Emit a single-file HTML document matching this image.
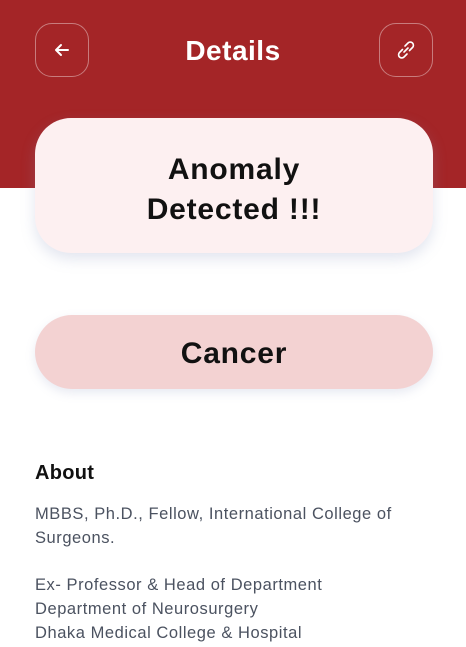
<!DOCTYPE html>
<html><head><style>
body{margin:0;width:466px;height:647px;overflow:hidden;background:#fff;font-family:"Liberation Sans",sans-serif;position:relative}
.hdr{position:absolute;left:0;top:0;width:466px;height:188px;background:#a42527}
.btn{position:absolute;top:23px;width:54px;height:54px;border:1.5px solid rgba(255,255,255,.4);border-radius:17px;box-sizing:border-box;display:flex;align-items:center;justify-content:center}
.title{position:absolute;top:35px;left:0;width:466px;text-align:center;color:#fff;font-weight:bold;font-size:28px;letter-spacing:0.5px}
.card{position:absolute;left:35px;top:118px;width:398px;height:135px;box-sizing:border-box;padding-top:8px;background:#fdf0f1;border-radius:36px;box-shadow:0 6px 14px rgba(140,150,190,.25);display:flex;align-items:center;justify-content:center;text-align:center;font-weight:bold;font-size:30px;line-height:40px;letter-spacing:0.8px;color:#111}
.pill{position:absolute;left:35px;top:315px;width:398px;height:74px;box-sizing:border-box;padding-top:4px;background:#f3d2d2;border-radius:37px;box-shadow:0 4px 10px rgba(140,150,190,.2);display:flex;align-items:center;justify-content:center;font-weight:bold;font-size:30px;letter-spacing:0.8px;color:#111}
.about{position:absolute;left:35px;top:462px;font-weight:bold;font-size:20px;letter-spacing:0.3px;color:#111}
.txt{position:absolute;left:35px;top:503px;font-size:16.5px;line-height:23.8px;letter-spacing:0.55px;color:#4b5260}
</style></head><body>
<div class="hdr"></div>
<div class="btn" style="left:35px"><svg width="20" height="20" viewBox="0 0 20 20"><path d="M16 10H4M9 5L4 10L9 15" stroke="#fff" stroke-width="2" fill="none" stroke-linecap="round" stroke-linejoin="round"/></svg></div>
<div class="title">Details</div>
<div class="btn" style="left:379px"><svg width="22" height="22" viewBox="0 0 22 22"><g stroke="#fff" stroke-width="1.6" fill="none" stroke-linecap="round"><path d="M10 7l3-3a3 3 0 0 1 4.5 4.5l-3 3"/><path d="M12 15l-3 3a3 3 0 0 1-4.5-4.5l3-3"/><path d="M9 13l4-4"/></g></svg></div>
<div class="card">Anomaly<br>Detected !!!</div>
<div class="pill">Cancer</div>
<div class="about">About</div>
<div class="txt">MBBS, Ph.D., Fellow, International College of<br>Surgeons.<br><br>Ex- Professor &amp; Head of Department<br>Department of Neurosurgery<br>Dhaka Medical College &amp; Hospital</div>
</body></html>
